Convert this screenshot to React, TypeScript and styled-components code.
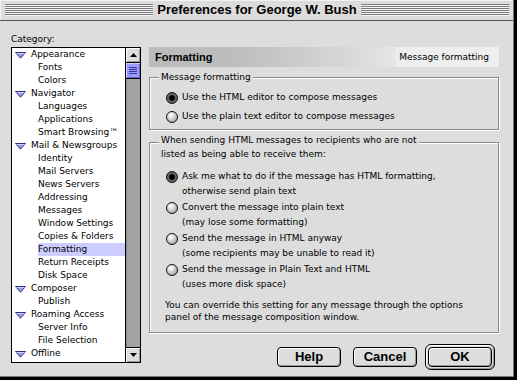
import React from "react";
import styled, { createGlobalStyle } from "styled-components";

const Global = createGlobalStyle`
  html, body { margin: 0; padding: 0; background: #000; }
  #root { width: 517px; height: 380px; }
`;

const Frame = styled.div`
  width: 517px;
  height: 380px;
  box-sizing: border-box;
  background: #000;
  padding: 0 3px 3px 0;
`;

const Window = styled.div`
  height: 100%;
  box-sizing: border-box;
  background: #dddddd;
  border-right: 1px solid #777;
  border-bottom: 1px solid #777;
  display: flex;
  flex-direction: column;
  font-family: "DejaVu Sans", Verdana, sans-serif;
  font-size: 9px;
  color: #000;
`;

const TitleBar = styled.div`
  height: 20px;
  flex: none;
  display: flex;
  align-items: center;
  padding: 0 4px 0 5px;
  border-bottom: 1px solid #555;
  background: #dcdcdc;
  box-shadow: inset 1px 1px 0 #f2f2f2;
`;

const Stripes = styled.div`
  flex: 1;
  height: 12px;
  background: repeating-linear-gradient(to bottom, #7a7a7a 0 1px, #f6f6f6 1px 2px);
`;

const Title = styled.div`
  font-family: "Liberation Sans", Arial, sans-serif;
  font-weight: bold;
  font-size: 13px;
  line-height: 20px;
  padding: 0 4px;
  white-space: nowrap;
`;

const Body = styled.div`
  flex: 1;
  min-height: 0;
  display: flex;
  gap: 8px;
  padding: 12px 14px 0 11px;
`;

const Side = styled.div`
  display: flex;
  flex-direction: column;
  width: 130px;
  flex: none;
`;

const SideLabel = styled.div`
  line-height: 13px;
  margin-bottom: 1px;
`;

const List = styled.div`
  width: 130px;
  height: 316px;
  box-sizing: border-box;
  border: 1px solid #000;
  background: #fff;
  display: flex;
  overflow: hidden;
`;

const Items = styled.div`
  flex: 1;
  display: flex;
  flex-direction: column;
`;

const Row = styled.div<{ $child?: boolean; $selected?: boolean }>`
  height: 13px;
  line-height: 13px;
  display: flex;
  align-items: center;
  gap: 5px;
  white-space: nowrap;
  margin-left: ${(p) => (p.$child ? "26px" : "3px")};
  background: ${(p) => (p.$selected ? "#ccccff" : "transparent")};
`;

const Disclosure = styled.svg`
  flex: none;
  width: 11px;
  height: 7px;
  margin-top: 2px;
`;

const Scrollbar = styled.div`
  width: 15px;
  flex: none;
  box-sizing: border-box;
  border-left: 1px solid #000;
  display: flex;
  flex-direction: column;
  background: #a3a3a3;
`;

const ArrowBox = styled.div<{ $down?: boolean }>`
  height: 15px;
  flex: none;
  box-sizing: border-box;
  background: #dddddd;
  display: flex;
  align-items: center;
  justify-content: center;
  ${(p) => (p.$down ? "border-top: 1px solid #000;" : "border-bottom: 1px solid #000;")}
  box-shadow: inset 1px 1px 0 #fff, inset -1px -1px 0 #999;
`;

const Thumb = styled.div`
  height: 16px;
  flex: none;
  box-sizing: border-box;
  border-bottom: 1px solid #000;
  background: #9c9cff;
  box-shadow: inset 1px 1px 0 #ccccff, inset -1px -1px 0 #6666cc;
  display: flex;
  align-items: center;
  justify-content: center;
`;

const Grip = styled.div`
  width: 8px;
  height: 7px;
  background: repeating-linear-gradient(to bottom, #333399 0 1px, transparent 1px 2px);
`;

const Track = styled.div`
  flex: 1;
  box-shadow: inset 1px 0 0 #888;
`;

const Panel = styled.div`
  width: 350px;
  flex: none;
  display: flex;
  flex-direction: column;
`;

const Header = styled.div`
  margin-top: 14px;
  height: 20px;
  flex: none;
  display: flex;
  align-items: center;
  justify-content: space-between;
  padding: 0 10px 0 6px;
  background: linear-gradient(to right, #bbbbbb 0%, #bdbdbd 25%, #dcdcdc 62%, #e6e6e6 70%, #eeeeee 71%, #eeeeee 100%);
`;

const HeaderTitle = styled.div`
  font-family: "Liberation Sans", Arial, sans-serif;
  font-weight: bold;
  font-size: 11px;
`;

const HeaderNote = styled.div`
  line-height: 13px;
`;

const Group = styled.div<{ $top: number; $bottom: number }>`
  margin-top: ${(p) => p.$top}px;
  border: 1px solid #888;
  box-shadow: 1px 1px 0 #fff, inset 1px 1px 0 #fff;
  padding: 0 10px ${(p) => p.$bottom}px 16px;
`;

const Legend = styled.div<{ $lift: number }>`
  width: fit-content;
  background: #dddddd;
  padding: 0 2px;
  line-height: 13px;
  margin: -${(p) => p.$lift}px 0 0 -7px;
  white-space: nowrap;
`;

const LegendMore = styled.div`
  line-height: 15px;
  margin-left: -5px;
`;

const Choices = styled.div<{ $top: number; $gap: number }>`
  margin-top: ${(p) => p.$top}px;
  display: flex;
  flex-direction: column;
  gap: ${(p) => p.$gap}px;
`;

const Choice = styled.div<{ $tall?: boolean }>`
  display: flex;
  align-items: ${(p) => (p.$tall ? "flex-start" : "center")};
  gap: 4px;
  height: ${(p) => (p.$tall ? "30px" : "19px")};
  line-height: 15px;
  white-space: nowrap;
`;

const Radio = styled.span<{ $on?: boolean; $tall?: boolean }>`
  flex: none;
  width: 12px;
  height: 12px;
  box-sizing: border-box;
  border-radius: 50%;
  border: 1px solid #111;
  margin-top: ${(p) => (p.$tall ? "2px" : "0")};
  background: ${(p) =>
    p.$on
      ? "radial-gradient(circle at 50% 50%, #000 0 2.2px, #2a2a2a 2.8px, #777 4px, #555 5px)"
      : "radial-gradient(circle at 38% 32%, #ffffff 0, #f0f0f0 18%, #bdbdbd 58%, #8c8c8c 100%)"};
`;

const Note = styled.div`
  margin: 7px 0 0 -1px;
  line-height: 12px;
  white-space: nowrap;
`;

const Buttons = styled.div`
  margin-top: 11px;
  display: flex;
  justify-content: flex-end;
  align-items: center;
  gap: 8px;
  padding-right: 4px;
`;

const Button = styled.button<{ $space?: number }>`
  width: 64px;
  height: 20px;
  box-sizing: border-box;
  padding: 0;
  margin: 0 ${(p) => p.$space ?? 0}px 0 0;
  border: 1px solid #000;
  border-radius: 4px;
  background: #dddddd;
  box-shadow: inset 1px 1px 0 #fff, inset -1px -1px 0 #999;
  font-family: "Liberation Sans", Arial, sans-serif;
  font-weight: bold;
  font-size: 13px;
  line-height: 18px;
  color: #000;
`;

const DefaultRing = styled.div`
  padding: 2px;
  border: 1px solid #000;
  border-radius: 6px;
  background: #dddddd;
  box-shadow: inset 1px 1px 0 #fff, inset -1px -1px 0 #999;
  display: flex;
`;

type Item = { label: string; child?: boolean; selected?: boolean };

const items: Item[] = [
  { label: "Appearance" },
  { label: "Fonts", child: true },
  { label: "Colors", child: true },
  { label: "Navigator" },
  { label: "Languages", child: true },
  { label: "Applications", child: true },
  { label: "Smart Browsing\u2122", child: true },
  { label: "Mail & Newsgroups" },
  { label: "Identity", child: true },
  { label: "Mail Servers", child: true },
  { label: "News Servers", child: true },
  { label: "Addressing", child: true },
  { label: "Messages", child: true },
  { label: "Window Settings", child: true },
  { label: "Copies & Folders", child: true },
  { label: "Formatting", child: true, selected: true },
  { label: "Return Receipts", child: true },
  { label: "Disk Space", child: true },
  { label: "Composer" },
  { label: "Publish", child: true },
  { label: "Roaming Access" },
  { label: "Server Info", child: true },
  { label: "File Selection", child: true },
  { label: "Offline" },
];

const sendOptions: { lines: [string, string]; on?: boolean }[] = [
  { lines: ["Ask me what to do if the message has HTML formatting,", "otherwise send plain text"], on: true },
  { lines: ["Convert the message into plain text", "(may lose some formatting)"] },
  { lines: ["Send the message in HTML anyway", "(some recipients may be unable to read it)"] },
  { lines: ["Send the message in Plain Text and HTML", "(uses more disk space)"] },
];

const Triangle = () => (
  <Disclosure viewBox="0 0 11 7">
    <polygon points="0.5,0.5 10.5,0.5 5.5,6.2" fill="#9a9af0" stroke="#2e2e7a" strokeWidth="1" />
    <line x1="1.5" y1="1.5" x2="9.5" y2="1.5" stroke="#d0d0ff" strokeWidth="1" />
  </Disclosure>
);

const Arrow = ({ down }: { down?: boolean }) => (
  <svg width="7" height="4" viewBox="0 0 7 4">
    <polygon points={down ? "0,0 7,0 3.5,4" : "0,4 7,4 3.5,0"} fill="#000" />
  </svg>
);

export default function App() {
  return (
    <>
      <Global />
      <Frame>
        <Window>
          <TitleBar>
            <Stripes />
            <Title>Preferences for George W. Bush</Title>
            <Stripes />
          </TitleBar>
          <Body>
            <Side>
              <SideLabel>Category:</SideLabel>
              <List>
                <Items>
                  {items.map((it) => (
                    <Row key={it.label} $child={it.child} $selected={it.selected}>
                      {!it.child && <Triangle />}
                      <span>{it.label}</span>
                    </Row>
                  ))}
                </Items>
                <Scrollbar>
                  <ArrowBox>
                    <Arrow />
                  </ArrowBox>
                  <Thumb>
                    <Grip />
                  </Thumb>
                  <Track />
                  <ArrowBox $down>
                    <Arrow down />
                  </ArrowBox>
                </Scrollbar>
              </List>
            </Side>
            <Panel>
              <Header>
                <HeaderTitle>Formatting</HeaderTitle>
                <HeaderNote>Message formatting</HeaderNote>
              </Header>
              <Group $top={10} $bottom={3}>
                <Legend $lift={7}>Message formatting</Legend>
                <Choices $top={4} $gap={0}>
                  <Choice>
                    <Radio $on />
                    <span>Use the HTML editor to compose messages</span>
                  </Choice>
                  <Choice>
                    <Radio />
                    <span>Use the plain text editor to compose messages</span>
                  </Choice>
                </Choices>
              </Group>
              <Group $top={12} $bottom={9}>
                <Legend $lift={9}>When sending HTML messages to recipients who are not</Legend>
                <LegendMore>listed as being able to receive them:</LegendMore>
                <Choices $top={7} $gap={1}>
                  {sendOptions.map((o) => (
                    <Choice key={o.lines[0]} $tall>
                      <Radio $on={o.on} $tall />
                      <span>
                        {o.lines[0]}
                        <br />
                        {o.lines[1]}
                      </span>
                    </Choice>
                  ))}
                </Choices>
                <Note>
                  You can override this setting for any message through the options
                  <br />
                  panel of the message composition window.
                </Note>
              </Group>
              <Buttons>
                <Button $space={4}>Help</Button>
                <Button>Cancel</Button>
                <DefaultRing>
                  <Button>OK</Button>
                </DefaultRing>
              </Buttons>
            </Panel>
          </Body>
        </Window>
      </Frame>
    </>
  );
}
